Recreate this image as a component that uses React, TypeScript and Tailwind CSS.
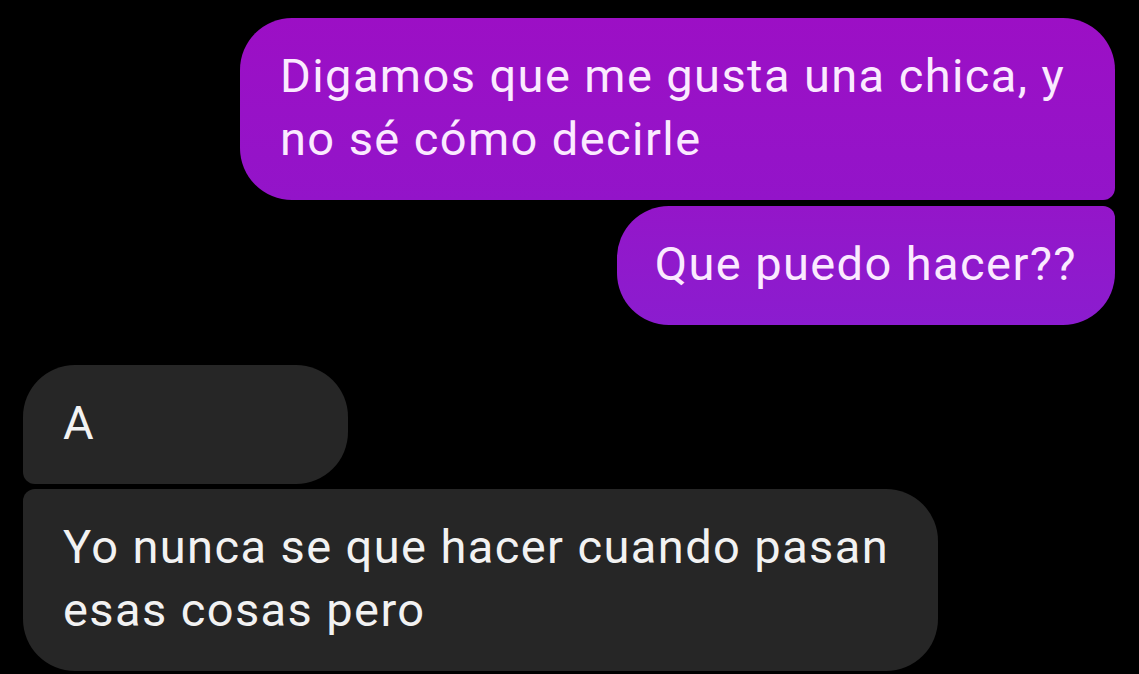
export default function App() {
  return (
    <div className="w-[1139px] h-[674px] overflow-hidden bg-black font-['Roboto',sans-serif] text-[47px] leading-[63px] tracking-[0.03em]">
      <div className="flex flex-col pt-[18px]">
        {/* Sent */}
        <div className="flex flex-col items-end gap-[6px] pr-[24px]">
          <div className="w-[875px] rounded-[52px] rounded-br-[12px] bg-gradient-to-b from-[#9c0fc5] to-[#9314c9] pl-[40px] pr-[30px] pt-[26px] pb-[30px] text-[#fbeaff]">
            Digamos que me gusta una chica, y no sé cómo decirle
          </div>
          <div className="rounded-[52px] rounded-tr-[12px] bg-gradient-to-b from-[#9416c9] to-[#8b1ccf] pl-[38px] pr-[38px] pt-[26px] pb-[30px] text-[#fbeaff]">
            Que puedo hacer??
          </div>
        </div>

        {/* Received */}
        <div className="mt-[40px] flex flex-col items-start gap-[5px] pl-[23px]">
          <div className="w-[325px] rounded-[52px] rounded-bl-[12px] bg-[#262626] px-[40px] pt-[26px] pb-[30px] text-[#f2f2f2]">
            A
          </div>
          <div className="w-[915px] rounded-[52px] rounded-tl-[12px] bg-[#262626] pl-[40px] pr-[30px] pt-[26px] pb-[30px] text-[#f2f2f2]">
            Yo nunca se que hacer cuando pasan esas cosas pero
          </div>
        </div>
      </div>
    </div>
  );
}
